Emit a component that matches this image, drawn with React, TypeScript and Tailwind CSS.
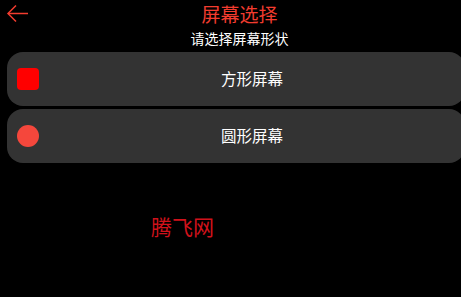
import React from 'react'

const font = { fontFamily: '"Noto Sans CJK SC", "Noto Sans", sans-serif' }

const ScreenOption = ({ label, shape }: { label: string; shape: 'square' | 'circle' }) => (
  <div className="flex items-center h-[54px] w-[458px] shrink-0 ml-[7px] rounded-[16px] bg-[#333333]">
    <div className="w-[32px] shrink-0 flex justify-end">
      {shape === 'square' ? (
        <div className="w-[22px] h-[22px] rounded-[4px] bg-[#ff0000]" />
      ) : (
        <div className="w-[22px] h-[22px] rounded-full bg-[#f5473c]" />
      )}
    </div>
    <div className="flex-1 text-center text-white text-[15.5px]">{label}</div>
  </div>
)

export default function App() {
  return (
    <div className="w-[461px] h-[297px] bg-black overflow-hidden" style={font}>
      <div className="relative h-[28px] flex items-center justify-center pl-[18px]">
        <svg
          className="absolute left-[6px] top-[4px]"
          width="23"
          height="20"
          viewBox="0 0 23 20"
          fill="none"
          stroke="#f33c2f"
          strokeWidth="1.5"
        >
          <path d="M22 9.5H2" />
          <path d="M10 1.5L2 9.5L10 17.5" />
        </svg>
        <span className="text-[#f33c2f] text-[19px] leading-[28px]">屏幕选择</span>
      </div>
      <div className="text-center text-white text-[14px] leading-[20px] pl-[18px]">请选择屏幕形状</div>
      <div className="mt-[4px] flex flex-col gap-[3px]">
        <ScreenOption label="方形屏幕" shape="square" />
        <ScreenOption label="圆形屏幕" shape="circle" />
      </div>
      <div className="mt-[48px] ml-[151px] text-[#d0121b] text-[21px] leading-[30px]">腾飞网</div>
    </div>
  )
}
